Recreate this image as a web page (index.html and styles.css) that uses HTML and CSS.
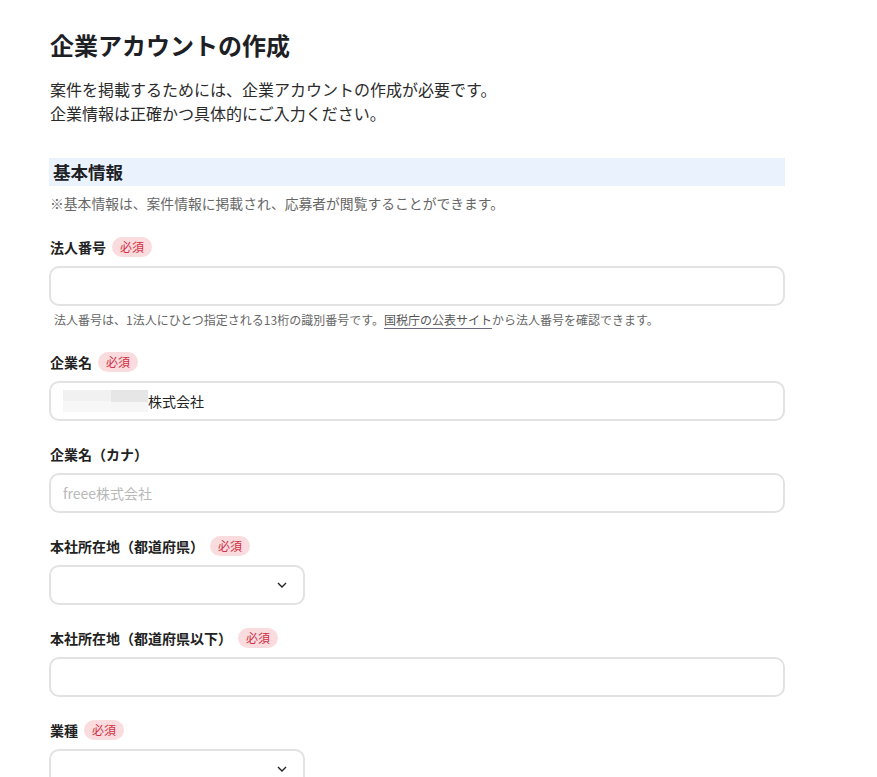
FILE: index.html
```html
<!DOCTYPE html>
<html lang="ja">
<head>
  <meta charset="UTF-8">
  <meta name="viewport" content="width=device-width, initial-scale=1.0">
  <title>企業アカウントの作成</title>
  <link rel="stylesheet" href="styles.css">
</head>
<body>
  <div class="container">
    <h1>企業アカウントの作成</h1>
    <p class="lead">案件を掲載するためには、企業アカウントの作成が必要です。<br>企業情報は正確かつ具体的にご入力ください。</p>

    <h2 class="section-title">基本情報</h2>
    <p class="section-note">※基本情報は、案件情報に掲載され、応募者が閲覧することができます。</p>

    <div class="field">
      <label class="label">法人番号 <span class="badge">必須</span></label>
      <input type="text" class="input">
      <p class="help">法人番号は、1法人にひとつ指定される13桁の識別番号です。<a href="#">国税庁の公表サイト</a>から法人番号を確認できます。</p>
    </div>

    <div class="field">
      <label class="label">企業名 <span class="badge">必須</span></label>
      <div class="input filled"><span class="redact"><span class="r1"></span><span class="r2"></span></span>株式会社</div>
    </div>

    <div class="field">
      <label class="label">企業名（カナ）</label>
      <input type="text" class="input" placeholder="freee株式会社">
    </div>

    <div class="field">
      <label class="label">本社所在地（都道府県） <span class="badge">必須</span></label>
      <div class="select">
        <svg class="chevron" width="10" height="6" viewBox="0 0 10 6"><polyline points="1,1 5,5 9,1" fill="none" stroke="#222" stroke-width="1.4"/></svg>
      </div>
    </div>

    <div class="field">
      <label class="label">本社所在地（都道府県以下） <span class="badge">必須</span></label>
      <input type="text" class="input">
    </div>

    <div class="field">
      <label class="label">業種 <span class="badge">必須</span></label>
      <div class="select">
        <svg class="chevron" width="10" height="6" viewBox="0 0 10 6"><polyline points="1,1 5,5 9,1" fill="none" stroke="#222" stroke-width="1.4"/></svg>
      </div>
    </div>
  </div>
</body>
</html>
```

FILE: styles.css
```css
body {
  font-family: "Noto Sans CJK JP", "Noto Sans", sans-serif;
  color: #222;
  background-color: #fff;
  margin: 0;
  padding: 0;
}
.container {
  width: 736px;
  padding: 29px 0 0 49px;
}
h1 {
  font-size: 24px;
  font-weight: 700;
  line-height: 32px;
  margin: 0 0 16px 1px;
  color: #1d2024;
}
.lead {
  font-size: 16px;
  line-height: 24px;
  margin: 0 0 33px 1px;
  color: #2b2b2b;
}
.section-title {
  background-color: #e9f2fd;
  font-size: 17.5px;
  font-weight: 700;
  line-height: 28px;
  height: 28px;
  margin: 0;
  padding: 0 4px;
  color: #1d2024;
}
.section-note {
  font-size: 13.8px;
  line-height: 18px;
  color: #666;
  margin: 8px 0 25px 1px;
}
.field {
  margin-bottom: 23px;
}
.label {
  display: flex;
  align-items: center;
  gap: 6px;
  height: 20px;
  font-size: 14px;
  font-weight: 700;
  margin: 0 0 9px 1px;
  color: #222;
}
.badge {
  display: inline-block;
  font-size: 12px;
  font-weight: 400;
  line-height: 20px;
  height: 20px;
  padding: 0 8px;
  border-radius: 10px;
  background-color: #fadbde;
  color: #d22f43;
}
.input {
  display: flex;
  align-items: center;
  box-sizing: border-box;
  width: 736px;
  height: 40px;
  border: 2px solid #e2e2e2;
  border-radius: 10px;
  padding: 0 12px;
  font-family: inherit;
  font-size: 14px;
  color: #222;
  background: #fff;
  outline: none;
}
.input::placeholder {
  color: #b8b8b8;
}
.redact {
  display: inline-flex;
  height: 22px;
}
.r1 {
  width: 48px;
  background: linear-gradient(#f1f1f1 0 50%, #f7f7f7 50% 100%);
}
.r2 {
  width: 37px;
  background: linear-gradient(#e6e6e6 0 55%, #f6f6f6 55% 100%);
}
.select {
  position: relative;
  box-sizing: border-box;
  width: 256px;
  height: 40px;
  border: 2px solid #e2e2e2;
  border-radius: 10px;
  background: #fff;
}
.chevron {
  position: absolute;
  right: 16px;
  top: 15px;
}
.help {
  font-size: 12px;
  line-height: 19px;
  color: #666;
  margin: 4px 0 1px 5px;
}
.help a {
  color: #555;
  text-decoration: none;
  border-bottom: 1px solid #6b6b80;
}
```
